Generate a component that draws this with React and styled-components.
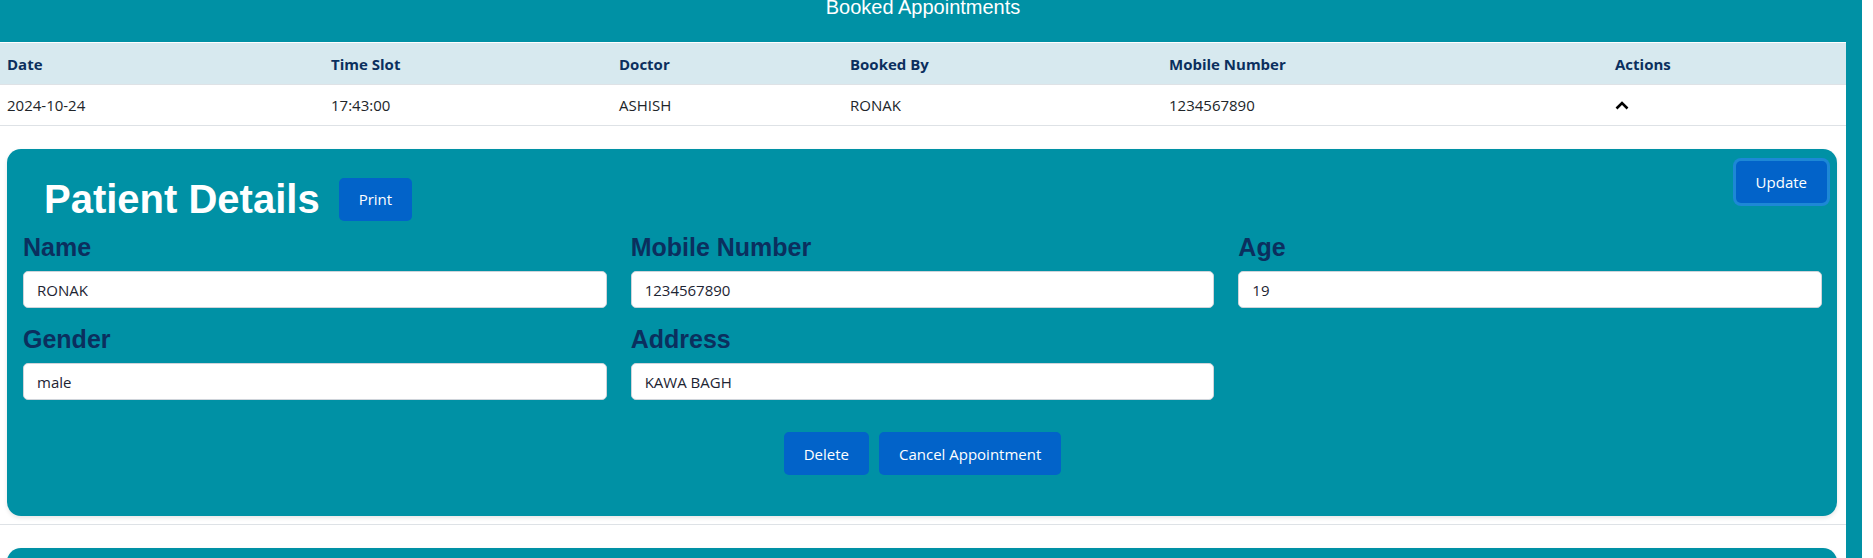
import styled, { createGlobalStyle } from "styled-components";

const GlobalStyle = createGlobalStyle`
    body {
        margin: 0;
        background: #fff;
        font-family: "Open Sans", "Noto Sans", sans-serif;
    }
`;

const Page = styled.div`
    background-color: #0091a5;
    margin-right: 11px;
    padding-right: 16px;
    min-height: 100vh;
`;

const Banner = styled.div`
    width: 1846px;
    height: 42px;
    overflow: hidden;
`;

const BannerTitle = styled.h2`
    margin: -5px 0 0;
    line-height: 24px;
    font-family: "Liberation Sans", Arial, sans-serif;
    font-size: 20px;
    font-weight: normal;
    color: #fff;
    text-align: center;
`;

const Table = styled.table`
    width: 1846px;
    table-layout: fixed;
    border-collapse: collapse;
    background-color: #fff;
    border-top: 1px solid #fff;
`;

const HeadCell = styled.th`
    height: 41px;
    padding: 0 7px;
    text-align: left;
    font-size: 15px;
    font-weight: 700;
    color: #0b2f5e;
    background-color: #d7e9ef;
    border-bottom: 1px solid #dee2e6;
`;

const Cell = styled.td`
    height: 40px;
    padding: 0 7px;
    font-size: 15px;
    color: #212529;
    border-bottom: 1px solid #dee2e6;
`;

const DetailCell = styled.td`
    padding: 8px 9px 8px 7px;
    border-bottom: 1px solid #dee2e6;
`;

const ToggleButton = styled.button`
    display: flex;
    align-items: center;
    padding: 0;
    border: none;
    background: none;
    cursor: pointer;
`;

const Card = styled.div`
    margin-top: 15px;
    padding: 16px 15px 16px 16px;
    background-color: #0091a5;
    border-radius: 14px;
    box-shadow: 0 2px 4px rgba(0, 0, 0, 0.1);
    min-height: ${(p) => (p.$empty ? "120px" : "auto")};
`;

const CardHeader = styled.div`
    display: flex;
    justify-content: space-between;
    align-items: flex-start;
    margin: -4px -5px 0 0;
`;

const TitleGroup = styled.div`
    display: flex;
    align-items: center;
    gap: 19px;
    margin: 14px 0 0 21px;
`;

const CardTitle = styled.h1`
    margin: 0;
    line-height: 48px;
    font-family: "Liberation Sans", Arial, sans-serif;
    font-size: 40px;
    font-weight: 700;
    color: #fff;
`;

const ActionButton = styled.button`
    height: ${(p) => (p.$tall ? "42px" : "43px")};
    padding: 0 20px;
    border: none;
    border-radius: 5px;
    background-color: #0263c9;
    color: #fff;
    font-family: "Open Sans", "Noto Sans", sans-serif;
    font-size: 15px;
    cursor: pointer;
    box-shadow: ${(p) => (p.$focused ? "0 0 0 3px #1d88d6" : "none")};
`;

const FieldGrid = styled.div`
    display: grid;
    grid-template-columns: repeat(3, 1fr);
    column-gap: 24px;
    row-gap: 17px;
    margin-top: 10px;
`;

const Field = styled.div`
    display: flex;
    flex-direction: column;
`;

const FieldLabel = styled.label`
    margin-bottom: 10px;
    line-height: 28px;
    font-family: "Liberation Sans", Arial, sans-serif;
    font-size: 25px;
    font-weight: 700;
    color: #0b2f5e;
`;

const FieldInput = styled.input`
    box-sizing: border-box;
    height: 37px;
    padding: 0 13px;
    border: 1px solid #cfd4da;
    border-radius: 5px;
    background: #fff;
    font-family: "Open Sans", "Noto Sans", sans-serif;
    font-size: 15px;
    color: #1d2433;
    outline: none;
`;

const ButtonRow = styled.div`
    display: flex;
    justify-content: center;
    gap: 10px;
    margin: 32px 0 25px;
`;

const columns = [
    { label: "Date", width: 324 },
    { label: "Time Slot", width: 288 },
    { label: "Doctor", width: 231 },
    { label: "Booked By", width: 319 },
    { label: "Mobile Number", width: 446 },
    { label: "Actions", width: 238 },
];

const appointment = {
    date: "2024-10-24",
    time: "17:43:00",
    doctor: "ASHISH",
    bookedBy: "RONAK",
    mobile: "1234567890",
};

const fields = [
    { label: "Name", value: "RONAK" },
    { label: "Mobile Number", value: "1234567890" },
    { label: "Age", value: "19" },
    { label: "Gender", value: "male" },
    { label: "Address", value: "KAWA BAGH" },
];

function ChevronUp() {
    return (
        <svg width="14" height="10" viewBox="0 0 14 10">
            <polyline points="1.5,8.5 7,3 12.5,8.5" fill="none" stroke="#000" strokeWidth="2.6" />
        </svg>
    );
}

function PatientDetails() {
    return (
        <Card>
            <CardHeader>
                <TitleGroup>
                    <CardTitle>Patient Details</CardTitle>
                    <ActionButton>Print</ActionButton>
                </TitleGroup>
                <ActionButton $tall $focused>Update</ActionButton>
            </CardHeader>
            <FieldGrid>
                {fields.map((f) => (
                    <Field key={f.label}>
                        <FieldLabel>{f.label}</FieldLabel>
                        <FieldInput defaultValue={f.value} />
                    </Field>
                ))}
            </FieldGrid>
            <ButtonRow>
                <ActionButton>Delete</ActionButton>
                <ActionButton>Cancel Appointment</ActionButton>
            </ButtonRow>
        </Card>
    );
}

export default function App() {
    return (
        <>
            <GlobalStyle />
            <Page>
                <Banner>
                    <BannerTitle>Booked Appointments</BannerTitle>
                </Banner>
                <Table>
                    <colgroup>
                        {columns.map((c) => (
                            <col key={c.label} style={{ width: c.width }} />
                        ))}
                    </colgroup>
                    <thead>
                        <tr>
                            {columns.map((c) => (
                                <HeadCell key={c.label}>{c.label}</HeadCell>
                            ))}
                        </tr>
                    </thead>
                    <tbody>
                        <tr>
                            <Cell>{appointment.date}</Cell>
                            <Cell>{appointment.time}</Cell>
                            <Cell>{appointment.doctor}</Cell>
                            <Cell>{appointment.bookedBy}</Cell>
                            <Cell>{appointment.mobile}</Cell>
                            <Cell>
                                <ToggleButton aria-label="Collapse">
                                    <ChevronUp />
                                </ToggleButton>
                            </Cell>
                        </tr>
                        <tr>
                            <DetailCell colSpan={6}>
                                <PatientDetails />
                            </DetailCell>
                        </tr>
                        <tr>
                            <DetailCell colSpan={6}>
                                <Card $empty />
                            </DetailCell>
                        </tr>
                    </tbody>
                </Table>
            </Page>
        </>
    );
}
